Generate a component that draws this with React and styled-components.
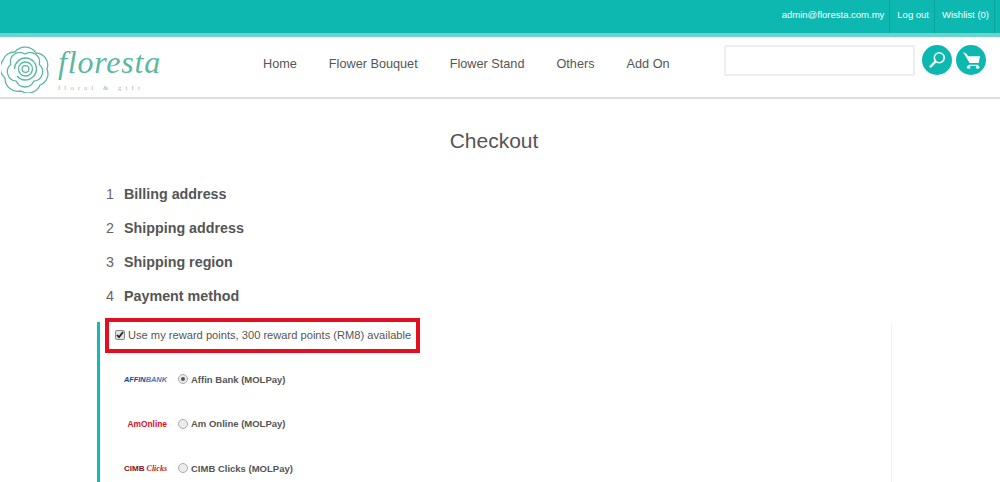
import React from 'react'
import styled, { createGlobalStyle } from 'styled-components'

const GlobalStyle = createGlobalStyle`
  html, body {
    margin: 0;
    padding: 0;
    height: 482px;
    overflow: hidden;
    background: #fff;
    font-family: "Liberation Sans", Arial, sans-serif;
    color: #555;
  }
  * { box-sizing: border-box; }
`

const TopBar = styled.div`
  height: 37px;
  background: #0cb8b0;
  border-bottom: 4px solid #6fd2cd;
  display: flex;
  justify-content: flex-end;
  padding-right: 5px;
`

const TopLink = styled.a`
  height: 33px;
  padding: 0 5px 5px 7px;
  display: flex;
  align-items: center;
  color: #fff;
  font-size: 9.5px;
  border-right: 1px solid #0aa39c;
`

const NavBar = styled.div`
  height: 62px;
  display: flex;
  align-items: flex-start;
  border-bottom: 2px solid #dedede;
`

const Logo = styled.div`
  width: 263px;
  padding: 8px 0 0 1px;
  display: flex;
  gap: 9px;
`

const LogoText = styled.div`
  display: flex;
  flex-direction: column;
  color: #5cb89f;
`

const LogoName = styled.span`
  font-family: "Liberation Serif", serif;
  font-style: italic;
  font-size: 32px;
  line-height: 34px;
  letter-spacing: 0.8px;
`

const LogoTag = styled.span`
  font-family: "Liberation Serif", serif;
  font-size: 7px;
  line-height: 8px;
  letter-spacing: 4px;
  color: #9bb;
  margin-top: 5px;
`

const Menu = styled.nav`
  display: flex;
  gap: 32px;
  width: 461px;
  margin-top: 20px;
`

const MenuItem = styled.a`
  font-size: 12.7px;
  color: #555;
`

const SearchInput = styled.div`
  width: 191px;
  height: 31px;
  margin: 8px 7px 0 0;
  border: 2px solid #eee;
  border-radius: 2px;
`

const RoundButton = styled.div`
  width: 30px;
  height: 30px;
  margin: 8px 4px 0 0;
  border-radius: 50%;
  background: #0cb8b0;
  display: flex;
  align-items: center;
  justify-content: center;
`

const Title = styled.h1`
  margin: 29px 0 0 -12px;
  font-size: 21px;
  line-height: 25px;
  font-weight: 400;
  text-align: center;
  color: #555;
`

const Steps = styled.div`
  margin: 24px 0 0 106px;
`

const Step = styled.div`
  height: 34px;
  display: flex;
  align-items: center;
  font-size: 14.3px;
`

const StepNumber = styled.span`
  width: 18px;
  color: #666;
`

const StepTitle = styled.span`
  font-weight: 700;
  color: #555;
`

const Panel = styled.div`
  margin: 9px 0 0 97px;
  width: 795px;
  height: 160px;
  border-left: 3px solid #0fbcb2;
  border-right: 1px solid #f3f3f3;
  position: relative;
`

const Highlight = styled.div`
  position: absolute;
  left: 5px;
  top: -4px;
  width: 315px;
  height: 35px;
  border: 4px solid #e2101f;
`

const RewardRow = styled.label`
  height: 26px;
  display: flex;
  align-items: center;
  padding-left: 15px;
  font-size: 11.13px;
  color: #555;
`

const Check = styled.span`
  width: 10px;
  height: 10px;
  margin-right: 3px;
  border: 1px solid #888;
  border-radius: 2px;
  background: #e4e4e4;
  display: flex;
  align-items: center;
  justify-content: center;
`

const Methods = styled.div`
  margin-top: 20px;
  display: flex;
  flex-direction: column;
  gap: 22.5px;
`

const Method = styled.div`
  height: 22px;
  display: flex;
  align-items: center;
`

const BankLogo = styled.div`
  width: 78px;
  padding-right: 11px;
  display: flex;
  justify-content: flex-end;
  align-items: baseline;
  white-space: nowrap;
`

const BankText = styled.span`
  font-size: ${p => p.$size}px;
  font-weight: 700;
  font-style: ${p => (p.$italic ? 'italic' : 'normal')};
  font-family: ${p => (p.$script ? '"Liberation Serif", serif' : 'inherit')};
  color: ${p => p.$color};
`

const Radio = styled.span`
  width: 10px;
  height: 10px;
  margin-right: 3px;
  border-radius: 50%;
  border: 1px solid #aaa;
  background: #ececec;
  display: flex;
  align-items: center;
  justify-content: center;

  &::after {
    content: '';
    display: ${p => (p.$on ? 'block' : 'none')};
    width: 4px;
    height: 4px;
    border-radius: 50%;
    background: #555;
  }
`

const MethodLabel = styled.span`
  font-size: 9.5px;
  font-weight: 700;
  color: #555;
`

const Rose = () => (
  <svg width="48" height="48" viewBox="0 0 48 48" fill="none" stroke="#5cb89f" strokeWidth="1.3">
    <path d="M14 7A13 13 0 0 1 35 8A12 12 0 0 1 46 24A12 12 0 0 1 39 40A13 13 0 0 1 20 46A13 13 0 0 1 4 33A13 13 0 0 1 2 15A12 12 0 0 1 14 7Z" />
    <path d="M24 9A9.5 9.5 0 0 1 38.3 19.4A9.5 9.5 0 0 1 32.8 36.1A9.5 9.5 0 0 1 15.2 36.1A9.5 9.5 0 0 1 9.7 19.4A9.5 9.5 0 0 1 24 9Z" />
    <path d="M13.5 24A11 11 0 1 1 24 35A11 11 0 0 1 16 31" />
    <circle cx="24.5" cy="24" r="7" />
    <circle cx="24.5" cy="24" r="3.4" />
  </svg>
)

const steps = ['Billing address', 'Shipping address', 'Shipping region', 'Payment method']
const menu = ['Home', 'Flower Bouquet', 'Flower Stand', 'Others', 'Add On']

const App = () => (
  <>
    <GlobalStyle />
    <TopBar>
      <TopLink>admin@floresta.com.my</TopLink>
      <TopLink>Log out</TopLink>
      <TopLink>Wishlist (0)</TopLink>
    </TopBar>
    <NavBar>
      <Logo>
        <Rose />
        <LogoText>
          <LogoName>floresta</LogoName>
          <LogoTag>floral &amp; gift</LogoTag>
        </LogoText>
      </Logo>
      <Menu>
        {menu.map(m => (
          <MenuItem key={m}>{m}</MenuItem>
        ))}
      </Menu>
      <SearchInput />
      <RoundButton>
        <svg width="18" height="18" viewBox="0 0 20 20" fill="none" stroke="#fff">
          <circle cx="12.5" cy="7.5" r="5.5" strokeWidth="1.8" />
          <path d="M8 12l-5 5" strokeWidth="2.8" strokeLinecap="round" />
        </svg>
      </RoundButton>
      <RoundButton>
        <svg width="19" height="19" viewBox="0 0 20 20" fill="#fff">
          <path d="M1 1l3.5 1.5 2 3h12.5l-1.5 7H8z" />
          <path d="M7 14.5h10v1.2H7z" />
          <circle cx="7" cy="17" r="1.8" />
          <circle cx="16.5" cy="17" r="1.8" />
        </svg>
      </RoundButton>
    </NavBar>
    <Title>Checkout</Title>
    <Steps>
      {steps.map((s, i) => (
        <Step key={s}>
          <StepNumber>{i + 1}</StepNumber>
          <StepTitle>{s}</StepTitle>
        </Step>
      ))}
    </Steps>
    <Panel>
      <Highlight />
      <RewardRow>
        <Check>
          <svg width="8" height="8" viewBox="0 0 8 8" fill="none" stroke="#222" strokeWidth="1.8">
            <path d="M1 4l2 2.2L7 1" />
          </svg>
        </Check>
        Use my reward points, 300 reward points (RM8) available
      </RewardRow>
      <Methods>
        <Method>
          <BankLogo>
            <BankText $size={7.4} $italic $color="#1d3f8f">AFFIN</BankText>
            <BankText $size={7.4} $italic $color="#4a78b8">BANK</BankText>
          </BankLogo>
          <Radio $on />
          <MethodLabel>Affin Bank (MOLPay)</MethodLabel>
        </Method>
        <Method>
          <BankLogo>
            <BankText $size={8.4} $color="#d8121f">AmOnline</BankText>
          </BankLogo>
          <Radio />
          <MethodLabel>Am Online (MOLPay)</MethodLabel>
        </Method>
        <Method>
          <BankLogo>
            <BankText $size={8} $color="#7a1020">CIMB</BankText>
            <BankText $size={8} $italic $script $color="#c0202c">&nbsp;Clicks</BankText>
          </BankLogo>
          <Radio />
          <MethodLabel>CIMB Clicks (MOLPay)</MethodLabel>
        </Method>
      </Methods>
    </Panel>
  </>
)

export default App
